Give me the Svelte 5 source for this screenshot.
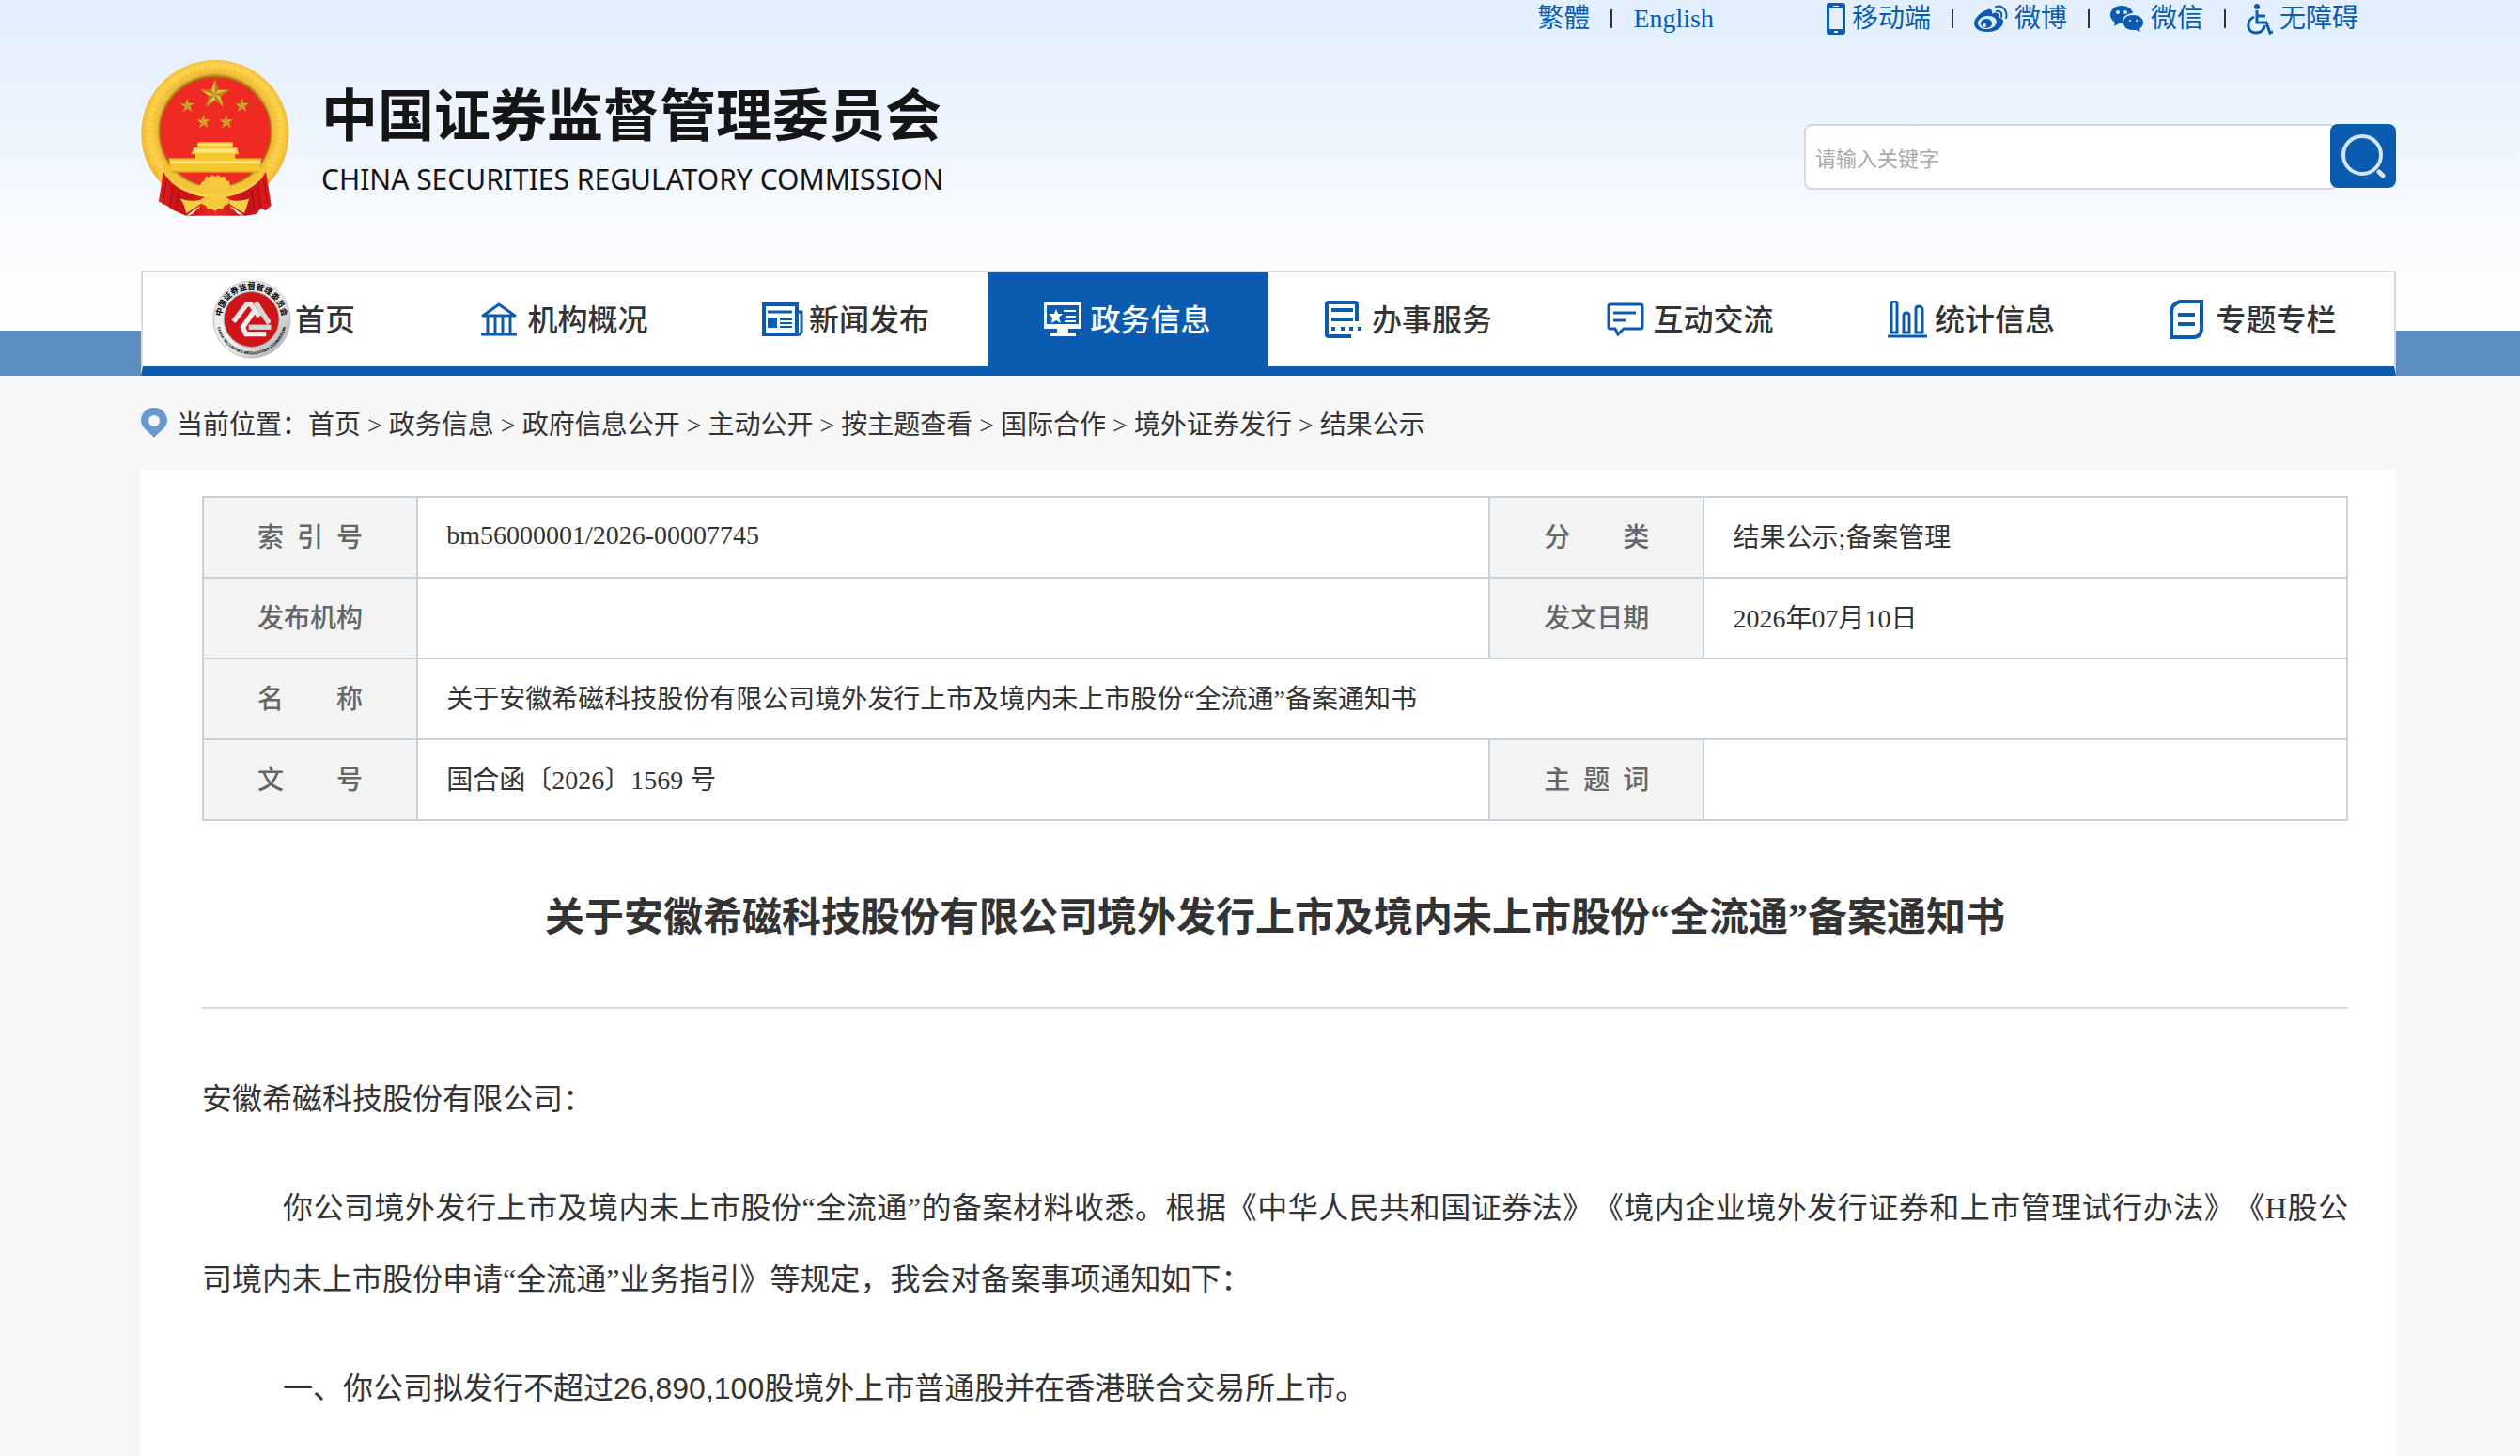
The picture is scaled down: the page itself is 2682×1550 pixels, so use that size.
<script>
    const menu = [
        { label: "首页", icon: "home" },
        { label: "机构概况", icon: "bank" },
        { label: "新闻发布", icon: "news" },
        { label: "政务信息", icon: "screen", active: true },
        { label: "办事服务", icon: "form" },
        { label: "互动交流", icon: "chat" },
        { label: "统计信息", icon: "chart" },
        { label: "专题专栏", icon: "topic" },
    ];

    const crumbs = ["首页", "政务信息", "政府信息公开", "主动公开", "按主题查看", "国际合作", "境外证券发行", "结果公示"];

    const title = "关于安徽希磁科技股份有限公司境外发行上市及境内未上市股份“全流通”备案通知书";

    let keyword = "";
</script>

{#snippet star(x, y, size)}
    <path
        transform="translate({x} {y}) scale({size})"
        d="M0-10 2.4-3.2 9.5-3.1 3.8 1.2 5.9 8.1 0 4-5.9 8.1-3.8 1.2-9.5-3.1-2.4-3.2Z"
        fill="#e9bd3d"
        stroke="#b8751f"
        stroke-width="0.4"
    />
    <path transform="translate({x} {y}) scale({size})" d="M0-10V0L2.4-3.2ZM9.5-3.1 0 0 3.8 1.2ZM5.9 8.1 0 0V4ZM-5.9 8.1 0 0-3.8 1.2ZM-9.5-3.1 0 0-2.4-3.2Z" fill="#b98122" />
{/snippet}

{#snippet menuIcon(name)}
    {#if name === "home"}
        <svg class="seal" viewBox="30 38 252 254" aria-hidden="true">
            <defs>
                <linearGradient id="silver" x1="0" y1="0" x2="1" y2="1">
                    <stop offset="0" stop-color="#dedede" />
                    <stop offset="0.5" stop-color="#f6f6f6" />
                    <stop offset="1" stop-color="#a0a0a0" />
                </linearGradient>
                <path id="ring-top" d="M58 165A97 97 0 1 1 252 165" />
                <path id="ring-bottom" d="M42 165A113 113 0 0 0 268 165" />
            </defs>
            <circle cx="156" cy="165" r="124" fill="url(#silver)" stroke="#bdbdbd" stroke-width="3" />
            <circle cx="155" cy="165" r="89" fill="#cf1519" stroke="#a9a9a9" stroke-width="3" />
            <text class="ring-name"><textPath href="#ring-top" startOffset="50%" text-anchor="middle">中国证券监督管理委员会</textPath></text>
            <text class="ring-latin"><textPath href="#ring-bottom" startOffset="50%" text-anchor="middle">CHINA SECURITIES REGULATORY COMMISSION</textPath></text>
            <g fill="none" stroke="#ece6e6" stroke-width="16">
                <path d="M97 172 140 116H152L180 156" />
                <path d="M168 110 212 178" stroke="#dcd4d4" />
                <path d="M162 140 127 190 137 212H202" stroke="#f3efef" />
                <path d="M146 190H218" stroke="#dcd4d4" />
            </g>
        </svg>
    {:else if name === "bank"}
        <svg width="38" height="36" viewBox="0 0 38 36" fill="none" stroke="currentColor" stroke-width="3" aria-hidden="true">
            <path d="M2 14 19 2 36 14Z" stroke-linejoin="round" />
            <path d="M7 15v18M15 15v18M23 15v18M31 15v18M0 34h38" />
        </svg>
    {:else if name === "news"}
        <svg width="44" height="36" viewBox="0 0 44 36" fill="none" stroke="currentColor" stroke-width="4" aria-hidden="true">
            <path d="M2 2h35v32H2Z" />
            <path d="M37 10h5v22l-2 2h-5" stroke-width="3" />
            <path d="M6 10h26" stroke-width="3" />
            <path d="M6 16h10v11H6Z" fill="currentColor" stroke="none" />
            <path d="M19 18h13M19 22h13M19 26h13" stroke-width="2" />
        </svg>
    {:else if name === "screen"}
        <svg width="40" height="36" viewBox="0 0 40 36" fill="currentColor" aria-hidden="true">
            <path d="M0 0h40v28H26v4h8v4H6v-4h8v-4H0ZM3 3v20h34V3Z" fill-rule="evenodd" />
            <path d="m13 7 2 5h5l-4 4 2 6-5-3-5 3 1-6-4-4h6Z" />
            <path d="M21 8h13v2H21ZM23 14h11v2H23ZM22 19h12v2H22Z" />
        </svg>
    {:else if name === "form"}
        <svg width="40" height="40" viewBox="0 0 40 40" fill="none" stroke="currentColor" stroke-width="4" aria-hidden="true">
            <path d="M34 22V4q0-2-2-2H4Q2 2 2 4v32q0 2 2 2h24" />
            <path d="M7 10h23M7 20h23" />
            <path d="M7 30h4M17 30h4M26 30h4M35 30h4" />
        </svg>
    {:else if name === "chat"}
        <svg width="40" height="36" viewBox="0 0 40 36" fill="none" stroke="currentColor" stroke-width="3" aria-hidden="true">
            <path d="M4 2h32q2 0 2 2v22q0 2-2 2H18l-6 6-3-6H4q-2 0-2-2V4q0-2 2-2Z" />
            <path d="M7 11h24M7 19h13" />
        </svg>
    {:else if name === "chart"}
        <svg width="42" height="40" viewBox="0 0 42 40" fill="none" stroke="currentColor" stroke-width="3" aria-hidden="true">
            <path d="M4 34V3q0-2 3-2t3 2v31ZM17 34V16q0-3 3-3t3 3v18ZM30 34V9q0-3 3-3t4 3v25ZM0 38h42" />
        </svg>
    {:else}
        <svg width="36" height="42" viewBox="0 0 36 42" fill="none" stroke="currentColor" stroke-width="4" aria-hidden="true">
            <path d="M11 2h23v28q0 10-9 10H2V13Q2 5 11 2Z" />
            <path d="M9 16h18M9 26h18" />
        </svg>
    {/if}
{/snippet}

<header>
    <div class="toolbar">
        <div class="languages">
            <a href="#traditional">繁體</a>
            <i></i>
            <a href="#english">English</a>
        </div>
        <a href="#mobile">
            <svg width="20" height="34" viewBox="0 0 20 34" aria-hidden="true">
                <path d="M3 0h14q3 0 3 3v28q0 3-3 3H3q-3 0-3-3V3q0-3 3-3ZM3 6v22h14V6ZM7 3v1h6V3ZM8 30v2h4v-2Z" fill="currentColor" fill-rule="evenodd" />
            </svg>移动端
        </a>
        <i></i>
        <a href="#weibo">
            <svg width="36" height="30" viewBox="0 0 36 30" aria-hidden="true">
                <path d="M15 5C8 7 0 14 0 20c0 6 7 9 14 9 10 0 17-5 17-11 0-3-3-4-5-5 1-4-2-6-7-3 1-4-1-6-4-5Z" fill="currentColor" />
                <ellipse cx="14" cy="19" rx="10" ry="7" fill="#e4effd" transform="rotate(-8 14 19)" />
                <ellipse cx="13" cy="20" rx="6" ry="5" fill="currentColor" />
                <circle cx="11" cy="22" r="2" fill="#e4effd" />
                <path d="M23 2c8-2 13 5 11 12M24 7c4-1 6 2 5 6" fill="none" stroke="currentColor" stroke-width="2" stroke-linecap="round" />
            </svg>微博
        </a>
        <i></i>
        <a href="#wechat">
            <svg width="36" height="28" viewBox="0 0 36 28" aria-hidden="true">
                <path d="M12 0C5 0 0 4 0 10c0 3 2 6 5 8l-1 4 5-3h4C12 13 17 8 24 8 23 3 18 0 12 0Z" fill="currentColor" />
                <path d="M24 10c-6 0-10 3-10 8s4 8 10 8h3l5 2-1-3c2-2 4-4 4-7 0-5-5-8-11-8Z" fill="currentColor" />
                <g fill="#e4effd">
                    <circle cx="8" cy="7" r="2" /><circle cx="16" cy="7" r="2" />
                    <circle cx="21" cy="16" r="1" /><circle cx="28" cy="16" r="1" />
                </g>
            </svg>微信
        </a>
        <i></i>
        <a href="#accessible">
            <svg width="28" height="33" viewBox="0 0 28 33" fill="none" stroke="currentColor" stroke-width="3" aria-hidden="true">
                <circle cx="11" cy="3" r="3" fill="currentColor" stroke="none" />
                <path d="M11 7v13h10l4 11 3-1M11 13h9M8 14C-1 18 0 31 10 31c6 0 9-4 9-8" />
            </svg>无障碍
        </a>
    </div>

    <div class="brand">
        <svg class="emblem" viewBox="16 17 474 500" role="img" aria-label="国徽">
            <defs>
                <radialGradient id="gold" cx="253" cy="245" r="238" gradientUnits="userSpaceOnUse">
                    <stop offset="0.74" stop-color="#b87a1c" />
                    <stop offset="0.78" stop-color="#efb936" />
                    <stop offset="0.88" stop-color="#ffd64e" />
                    <stop offset="1" stop-color="#f0b735" />
                </radialGradient>
                <linearGradient id="drape" x1="0" y1="0" x2="1" y2="0">
                    <stop offset="0" stop-color="#e11b1d" />
                    <stop offset="0.25" stop-color="#c41217" />
                    <stop offset="0.5" stop-color="#f02b24" />
                    <stop offset="0.75" stop-color="#c41217" />
                    <stop offset="1" stop-color="#e11b1d" />
                </linearGradient>
            </defs>
            <path d="M253 17C384 17 489 123 489 252c0 68-25 117-61 157l-80 61H157l-80-61c-36-40-61-89-61-157C16 123 122 17 253 17Z" fill="url(#gold)" />
            <circle cx="253" cy="252" r="208" fill="none" stroke="#d89624" stroke-width="18" stroke-dasharray="5 11" opacity="0.2" />
            <ellipse cx="253" cy="247" rx="177" ry="175" fill="#ee2a22" stroke="#a8641a" stroke-width="4" />
            {@render star(252, 127, 4.7)}
            {@render star(164, 163, 2.3)}
            {@render star(339, 163, 2.3)}
            {@render star(216, 215, 2.3)}
            {@render star(289, 215, 2.3)}
            <path d="M197 280h112v17h14l6 22h-12v13h85l-9 43H113l-9-43h86v-13h-14l9-22h12Z" fill="#f7c72e" />
            <path d="M186 302h134v12H186ZM197 285h112v5H197ZM108 340h290v8H108Z" fill="#ffe789" />
            <path d="M113 375h280" stroke="#e0a41e" stroke-width="5" />
            <path d="M87 374c22 46 79 79 165 87 84-6 142-43 164-87l17 109-18 17-15-8-16 19-35 5H159l-25-11-18-8-15-12-29-15Z" fill="url(#drape)" />
            <path d="M96 400 86 480M117 420l-9 70M137 434l-10 66M409 400l12 80M389 420l9 70M370 434l8 66" stroke="#a60e13" stroke-width="4" />
            <path d="M88 345c26 40 74 68 122 76l43 10 43-10c48-8 98-36 122-76l2 20c-24 42-76 72-134 80l-33-12-33 12c-58-8-110-38-134-80Z" fill="#f4c435" />
            <path d="m209 410 10-8 4-12 12 3 8-8 10 6 10-6 8 8 12-3 4 12 12 5 2 20-36 16-12-12-10 3-12 13-31-18Z" fill="#f5c93b" />
            <path d="m207 463 29-12 17 5 17-5 29 12-5 16-11 4-7 12-12-2-11 8-11-7-12 2-8-12-13-6Z" fill="#f5c93b" />
            <path d="M141 461q33 11 66 4l3 11-50 33Q155 480 141 461ZM362 461q-33 11-63 4l-3 11 50 33q9-24 16-48Z" fill="#f7cf45" />
            <path d="M160 517q34-30 47-32-15 12-27 26ZM346 517q-34-30-47-32 15 12 27 26Z" fill="#fff1d6" />
        </svg>
        <div class="names">
            <h1>中国证券监督管理委员会</h1>
            <p>CHINA SECURITIES REGULATORY COMMISSION</p>
        </div>
        <form class="search" on:submit|preventDefault>
            <input type="text" aria-label="请输入关键字" placeholder="请输入关键字" bind:value={keyword} />
            <button type="submit" aria-label="搜索">
                <svg width="48" height="48" viewBox="0 0 48 48" fill="none" stroke="#d6e5f5" stroke-width="4" aria-hidden="true">
                    <circle cx="23" cy="23" r="20" />
                    <path d="m41 41 4 4" stroke-width="5" stroke-linecap="round" />
                </svg>
            </button>
        </form>
    </div>

    <div class="menu-band">
        <nav>
            {#each menu as item}
                <a href="#{item.icon}" class:active={item.active} class:first={item.icon === "home"}>
                    <span class="icon">{@render menuIcon(item.icon)}</span>
                    <span class="text">{item.label}</span>
                </a>
            {/each}
        </nav>
    </div>
</header>

<main>
    <div class="crumbs">
        <svg width="28" height="32" viewBox="0 0 28 32" aria-hidden="true">
            <path d="M14 0C6 0 0 6 0 14c0 7 9 12 14 18 5-6 14-11 14-18C28 6 22 0 14 0Z" fill="#6699cf" />
            <circle cx="14" cy="14" r="6" fill="#f7f7f7" />
        </svg>
        <p>当前位置：{#each crumbs as crumb, i}{#if i > 0}{" > "}{/if}<a href="#crumb-{i}">{crumb}</a>{/each}</p>
    </div>

    <article>
        <table>
            <colgroup>
                <col class="label" />
                <col class="wide" />
                <col class="label" />
                <col />
            </colgroup>
            <tbody>
                <tr>
                    <th scope="row">索&ensp;引&ensp;号</th>
                    <td>bm56000001/2026-00007745</td>
                    <th scope="row">分&emsp;&emsp;类</th>
                    <td>结果公示;备案管理</td>
                </tr>
                <tr>
                    <th scope="row">发布机构</th>
                    <td></td>
                    <th scope="row">发文日期</th>
                    <td>2026年07月10日</td>
                </tr>
                <tr>
                    <th scope="row">名&emsp;&emsp;称</th>
                    <td colspan="3">{title}</td>
                </tr>
                <tr>
                    <th scope="row">文&emsp;&emsp;号</th>
                    <td>国合函〔2026〕1569 号</td>
                    <th scope="row">主&ensp;题&ensp;词</th>
                    <td></td>
                </tr>
            </tbody>
        </table>

        <h2>{title}</h2>

        <div class="content">
            <p class="addressee">安徽希磁科技股份有限公司：</p>
            <p>你公司境外发行上市及境内未上市股份“全流通”的备案材料收悉。根据《中华人民共和国证券法》《境内企业境外发行证券和上市管理试行办法》《H股公<span class="keep">司境内</span>未上市股份申请“全流通”业务指引》等规定，我会对备案事项通知如下：</p>
            <p>一、你公司拟发行不超过<span class="amount">26,890,100</span>股境外上市普通股并在香港联合交易所上市。</p>
        </div>
    </article>
</main>

<style>
    :global(body){
        background-color: #f7f7f7;
        color: #333;
        font-family: "Liberation Serif", "Noto Sans CJK SC", serif;
        font-size: 28px;
        text-spacing-trim: space-all;
    }

    a{
        color: inherit;
        text-decoration: none;
    }

    h1, h2, p{
        margin: 0;
    }

    header{
        background: linear-gradient(#e3effd 0, #e7f1fd 70px, #eff6ff 160px, #f7fafe 220px, #fdfdff 300px, #fff 350px);
    }

    .toolbar{
        display: flex;
        justify-content: flex-end;
        align-items: center;
        height: 40px;
        padding-right: 172px;
        color: #0b5cb1;
    }

    .toolbar a{
        display: flex;
        align-items: center;
        gap: 7px;
        line-height: 40px;
    }

    .toolbar i{
        width: 2px;
        height: 20px;
        margin: 0 22px;
        background-color: #333;
    }

    .languages{
        display: flex;
        align-items: center;
        margin-right: 120px;
    }

    .brand{
        display: flex;
        align-items: center;
        padding: 24px 132px 58px 150px;
    }

    .emblem{
        width: 158px;
        height: 166px;
        margin-right: 34px;
    }

    .names{
        color: #151515;
    }

    h1{
        font-family: "Noto Sans CJK SC", sans-serif;
        font-size: 60px;
        font-weight: bold;
        line-height: 72px;
    }

    .names p{
        padding-top: 16px;
        font-family: "Noto Sans", sans-serif;
        font-size: 30px;
        line-height: 40px;
    }

    .search{
        display: flex;
        width: 630px;
        margin-left: auto;
        margin-top: 40px;
    }

    .search input{
        flex: 1;
        min-width: 0;
        height: 70px;
        box-sizing: border-box;
        margin-right: -8px;
        padding: 0 10px;
        border: 2px solid #d9d9d9;
        border-radius: 8px;
        background-color: #fff;
        font-family: "Noto Sans CJK SC", sans-serif;
        font-size: 22px;
    }

    .search input::placeholder{
        color: #a9a9a9;
    }

    .search button{
        display: flex;
        justify-content: center;
        align-items: center;
        width: 70px;
        height: 68px;
        padding: 0;
        border: none;
        border-radius: 8px;
        background-color: #0b5cb1;
        cursor: pointer;
    }

    .menu-band{
        padding: 0 132px 0 150px;
        background: linear-gradient(to top, #5b8dc1 48px, transparent 48px);
    }

    nav{
        display: grid;
        grid-template-columns: repeat(8, 1fr);
        border: 2px solid #d9d9d9;
        border-bottom: 10px solid #0b5cb1;
        background-color: #fff;
    }

    nav a{
        display: flex;
        align-items: center;
        height: 100px;
        padding-left: 60px;
        font-size: 32px;
        font-weight: 500;
    }

    nav .icon{
        display: flex;
        width: 50px;
        color: #0b5cb1;
    }

    nav .text{
        padding-bottom: 4px;
    }

    nav a.first{
        padding-left: 74px;
    }

    nav .first .icon{
        width: 88px;
    }

    nav a.active, nav .active .icon{
        background-color: #0b5cb1;
        color: #fff;
    }

    .seal{
        width: 84px;
        height: 84px;
    }

    .ring-name{
        font-family: "Noto Sans CJK SC", sans-serif;
        font-size: 26px;
        font-weight: bold;
    }

    .ring-latin{
        font-family: "Liberation Sans", sans-serif;
        font-size: 13px;
        font-weight: bold;
    }

    main{
        padding: 0 132px 0 150px;
    }

    .crumbs{
        display: flex;
        align-items: center;
        gap: 10px;
        height: 100px;
    }

    article{
        padding: 28px 51px 60px 65px;
        background-color: #fff;
    }

    table{
        width: 100%;
        table-layout: fixed;
        border-collapse: collapse;
    }

    col.label{
        width: 10%;
    }

    col.wide{
        width: 50%;
    }

    th, td{
        height: 80px;
        padding: 0 0 4px;
        border: 2px solid #c6d1db;
    }

    th{
        background-color: #f3f3f3;
        color: #666;
        font-weight: 500;
    }

    td{
        padding-left: 30px;
    }

    h2{
        padding: 68px 0 60px;
        border-bottom: 2px solid #ddd;
        font-size: 42px;
        line-height: 70px;
        text-align: center;
    }

    .content{
        padding-top: 58px;
        font-size: 32px;
        line-height: 76px;
    }

    .content p{
        margin-bottom: 40px;
        text-align: justify;
        text-indent: 86px;
    }

    .content .addressee{
        text-indent: 0;
    }

    .keep{
        display: inline-block;
        text-indent: 0;
    }

    .amount{
        font-family: "Liberation Sans", sans-serif;
    }
</style>
